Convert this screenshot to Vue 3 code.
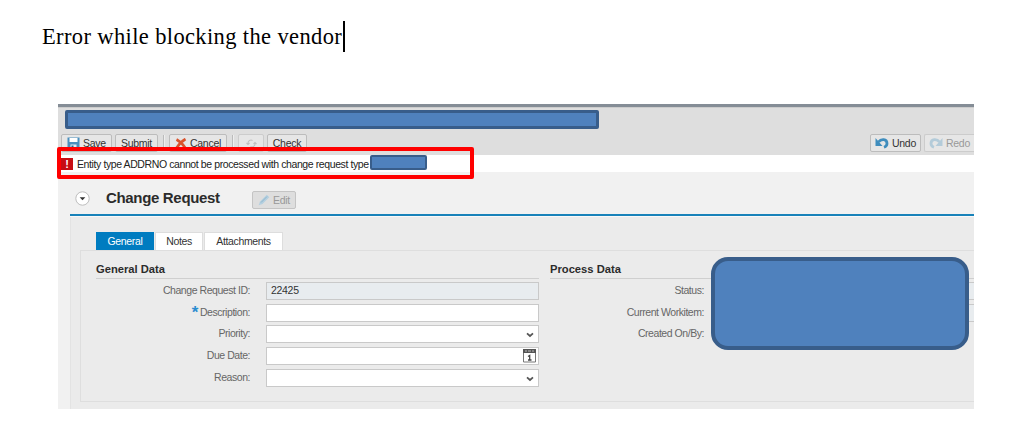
<script setup>
const tabs = ['General', 'Notes', 'Attachments']
const fields = [
  { label: 'Change Request ID:', value: '22425', kind: 'readonly' },
  { label: 'Description:', required: true },
  { label: 'Priority:', kind: 'select' },
  { label: 'Due Date:', kind: 'date' },
  { label: 'Reason:', kind: 'select' },
]
const processFields = [
  { label: 'Status:', box: true },
  { label: 'Current Workitem:', box: true },
  { label: 'Created On/By:', box: false },
]
</script>

<template>
  <main class="page">
    <h1 class="title"><span class="title-text">Error while blocking the vendor</span><i class="caret"></i></h1>
    <section class="app">
      <header class="top">
        <div class="redacted-title"></div>
        <div class="toolbar">
          <button class="btn save">
            <svg width="13" height="12" viewBox="0 0 13 12"><path d="M.5.5h12v11H2L.5 10z" fill="#4a8fbd" /><path d="M2.5 1h8v4h-8z" fill="#fff" /><path d="M3.5 7.5h6v4h-6z" fill="#dcecf5" /><path d="M4.5 8.5h2v3h-2z" fill="#24658f" /></svg>
            <span>Save</span>
          </button>
          <button class="btn submit"><span>Submit</span></button>
          <i class="sep"></i>
          <button class="btn cancel">
            <svg width="12" height="11" viewBox="0 0 12 11"><path d="M1.5 1.5c3 1.5 6 4.500 8.500 8M10.500 1C7 3 4 6 1.500 10" fill="none" stroke="#d9532c" stroke-width="2.600" /></svg>
            <span>Cancel</span>
          </button>
          <i class="sep"></i>
          <button class="btn refresh">
            <svg width="11" height="11" viewBox="0 0 11 11"><path d="M2 6.500V5a3 3 0 0 1 4.500-2.500M9 4.500V6a3 3 0 0 1-4.500 2.500M.5 5 2 6.500 3.500 5M7.500 6 9 4.500 10.500 6" fill="none" stroke="#c0c0c0" stroke-width="1.100" /></svg>
          </button>
          <button class="btn check"><span>Check</span></button>
          <div class="history">
            <button class="btn undo">
              <svg width="14" height="12" viewBox="0 0 14 12"><path d="M3.500 5C6 1.500 12 1.500 12 6.500c0 2-1 3-3 3.700" fill="none" stroke="#3f8dbd" stroke-width="2.800" /><path d="M.5 1v8h7z" fill="#3f8dbd" /></svg>
              <span>Undo</span>
            </button>
            <button class="btn redo">
              <svg width="14" height="12" viewBox="0 0 14 12"><path d="M10.500 5C8 1.500 2 1.500 2 6.500c0 2 1 3 3 3.700" fill="none" stroke="#b3cbd9" stroke-width="2.800" /><path d="M13.500 1v8h-7z" fill="#b3cbd9" /></svg>
              <span>Redo</span>
            </button>
          </div>
        </div>
      </header>
      <div class="message">
        <i class="alert">!</i>
        <span class="message-text">Entity type ADDRNO cannot be processed with change request type</span>
        <i class="redacted-type"></i>
      </div>
      <div class="heading">
        <svg class="toggle" width="15" height="15" viewBox="0 0 15 15"><circle cx="7.500" cy="7.500" r="6.700" fill="#fff" stroke="#bdbdbd" /><path d="M4.700 6.300h5.600L7.500 9.200z" fill="#333" /></svg>
        <h2>Change Request</h2>
        <button class="btn edit">
          <svg width="12" height="12" viewBox="0 0 12 12"><path d="M.7 11.300 2 7.500 8.800.7l2.500 2.500L4.500 10z" fill="#b5d0e0" /><path d="m3 8.500 6-6" stroke="#8fb6cd" /></svg>
          <span>Edit</span>
        </button>
      </div>
      <div class="content">
        <nav class="tabs">
          <span v-for="(tab, i) in tabs" :key="tab" class="tab" :class="{ active: i === 0, ['tab-' + i]: true }"><b>{{ tab }}</b></span>
        </nav>
        <div class="panel">
          <div class="group general">
            <h3>General Data</h3>
            <div v-for="field in fields" :key="field.label" class="row">
              <label><em v-if="field.required">*</em>{{ field.label }}</label>
              <div class="input" :class="field.kind">
                <span>{{ field.value }}</span>
                <svg v-if="field.kind === 'select'" class="chevron" width="8" height="6" viewBox="0 0 8 6"><path d="m1 1.300 3 2.700 3-2.700" fill="none" stroke="#555" stroke-width="1.700" /></svg>
                <svg v-if="field.kind === 'date'" class="calendar" width="13" height="14" viewBox="0 0 13 14"><path d="M.5 1v12h12V1" fill="#fff" stroke="#777" /><path d="M0 0h13v4H0z" fill="#555" /><path d="M2 2h2m1 0h3m1 0h2" stroke="#bbb" /><path d="m5 7.500 1.700-1V11M5 11h3.500" fill="none" stroke="#444" stroke-width="1.300" /></svg>
              </div>
            </div>
          </div>
          <div class="group process">
            <h3>Process Data</h3>
            <div v-for="field in processFields" :key="field.label" class="row">
              <label>{{ field.label }}</label>
              <div v-if="field.box" class="input readonly"></div>
            </div>
            <div class="redacted-values"></div>
          </div>
        </div>
      </div>
      <div class="highlight"></div>
    </section>
  </main>
</template>

<style>
body { margin: 0; background: #fff; }
</style>

<style scoped>
* { box-sizing: border-box; }
.page { width: 1036px; height: 431px; padding: 21px 0 0 42px; overflow: hidden; font-family: "Liberation Sans", Arial, sans-serif; font-size: 10.5px; color: #333; }
.title { display: flex; align-items: flex-start; height: 83px; margin: 0; font: 400 22.5px/32px "Liberation Serif", serif; color: #000; }
.title-text { width: 301px; letter-spacing: .37px; white-space: nowrap; }
.caret { width: 2px; height: 31px; background: #000; }
.app { position: relative; width: 916px; height: 305px; margin-left: 16px; background: #f1f1f1; }
.top { height: 51px; padding: 3px 0 0 7px; border-top: 3px solid #858d96; background: #dedede; box-shadow: inset 0 1px #ccc; }
.redacted-title { width: 534px; height: 19px; margin-bottom: 5px; border: 3px solid #385d8a; border-radius: 2px; background: #4f81bd; }
.toolbar { display: flex; height: 18px; margin-left: -4px; }
.btn { display: flex; align-items: center; justify-content: center; gap: 3px; height: 18px; padding: 0; border: 1px solid #bcbcbc; border-radius: 2px; background: #e6e6e6; color: #333; font: 10.5px/16px "Liberation Sans", Arial, sans-serif; letter-spacing: -.28px; white-space: nowrap; flex: none; }
.save { width: 51px; margin-right: 3px; }
.submit { width: 43px; }
.cancel { width: 58px; }
.refresh { width: 26px; margin-right: 3px; border-color: #ccc; }
.check { width: 40px; letter-spacing: -.28px; }
.sep { width: 2px; height: 15px; margin: 1px 4px 0 5px; border-left: 1px solid #bbb; border-right: 1px solid #eee; }
.history { display: flex; gap: 3px; margin-left: auto; }
.undo { width: 51px; }
.redo { width: 50px; border-right: 0; border-radius: 2px 0 0 2px; color: #999; border-color: #ccc; }
.message { display: flex; align-items: center; height: 17px; padding-left: 3px; background: #fff; color: #222; }
.alert { width: 12px; height: 12px; margin-right: 4px; background: #c70d14; color: #fff; font: 700 11px/12px "Liberation Sans", sans-serif; text-align: center; }
.message-text { width: 291px; letter-spacing: -.4px; white-space: nowrap; }
.redacted-type { width: 57px; height: 15px; margin: -3px 0 0 2px; border: 2px solid #385d8a; border-radius: 2px; background: #4f81bd; }
.heading { display: flex; align-items: flex-start; height: 42px; padding: 11px 0 0 17px; }
.toggle { margin-top: 8px; }
h2 { width: 146px; margin: 6px 0 0 16px; font-size: 15px; line-height: 18px; letter-spacing: -.33px; color: #2b2b2b; white-space: nowrap; }
.heading .edit { width: 44px; margin-top: 8px; background: #dedede; color: #999; border-color: #c4c4c4; }
.content { height: 195px; margin-left: 12px; padding: 14px 0 0 10px; border-top: 2px solid #1882b9; background: #ebebeb; box-shadow: inset 0 1px #f8f8f8, inset 1px 0 #e3e3e3; }
.tabs { display: flex; height: 20px; padding: 2px 0 0 16px; }
.tab { height: 18px; border: 1px solid #ddd; border-bottom: 0; background: #fff; line-height: 17px; letter-spacing: -.35px; text-align: center; }
.tab b { font-weight: 400; }
.tab-0 { width: 58px; margin-right: 1px; }
.tab-1 { width: 48px; margin-right: 1px; }
.tab-2 { width: 79px; }
.active { background: #007cc0; border-color: #007cc0; color: #fff; }
.panel { display: flex; height: 152px; padding-left: 15px; border: 1px solid #dedede; border-right: 0; }
.group { position: relative; width: 443px; }
.process { width: 424px; margin-left: 11px; }
h3 { height: 28px; margin: 0 0 3px; padding-top: 10px; border-bottom: 1px solid #cfcfcf; font-size: 11.2px; line-height: 16px; color: #2b2b2b; }
.row { display: flex; height: 18px; margin-bottom: 3.7px; }
label { width: 154px; margin-right: 16px; text-align: right; color: #666; line-height: 17px; letter-spacing: -.45px; white-space: nowrap; }
em { position: relative; top: -2px; margin-right: 2px; color: #2a8cd0; font: 700 17px/10px "Liberation Sans", sans-serif; vertical-align: -4px; }
.input { position: relative; width: 273px; height: 18px; padding-left: 4px; border: 1px solid #c9c9c9; background: #fff; line-height: 15px; letter-spacing: -.3px; }
.readonly { background: #e8ecef; }
.process .input { width: 254px; border-right: 0; }
.chevron { position: absolute; right: 4px; top: 6px; }
.calendar { position: absolute; right: 2px; top: 1px; }
.redacted-values { position: absolute; left: 161px; top: 6px; width: 258px; height: 93px; border: 4px solid #385d8a; border-radius: 17px; background: #4f81bd; }
.highlight { position: absolute; left: -1px; top: 43px; width: 417px; height: 32px; border: 4px solid #f00; border-radius: 2px; }
</style>
